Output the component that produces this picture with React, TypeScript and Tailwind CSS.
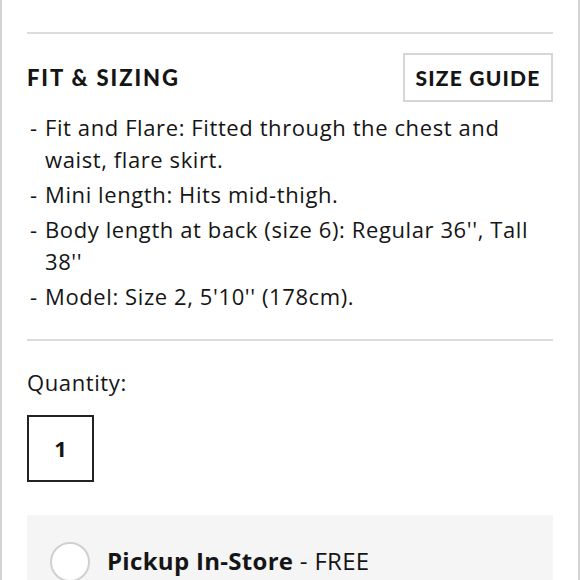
import React from "react";

const items: string[] = [
  "Fit and Flare: Fitted through the chest and waist, flare skirt.",
  "Mini length: Hits mid-thigh.",
  "Body length at back (size 6): Regular 36'', Tall 38''",
  "Model: Size 2, 5'10'' (178cm).",
];

export default function App() {
  return (
    <div className="w-[580px] h-[580px] overflow-hidden bg-white border-x-2 border-[#d4d4d4] text-[#151515]">
      <div className="px-[25px] pt-[32px]">
        <div className="h-[2px] bg-[#dcdcdc]" />
        <div className="mt-[19px] flex items-center justify-between" style={{ fontFamily: "Lato, sans-serif" }}>
          <h2 className="text-[22px] font-black tracking-[1.9px] leading-none">FIT &amp; SIZING</h2>
          <button className="w-[150px] h-[49px] border-2 border-[#d6d6d6] bg-white text-[21px] font-black tracking-[1.2px] leading-none text-[#151515]">
            SIZE GUIDE
          </button>
        </div>
        <div style={{ fontFamily: "'Open Sans', sans-serif" }}>
          <ul className="mt-[9px] pr-[20px] flex flex-col gap-[3px] text-[22px] leading-[32px] tracking-[0.6px]">
            {items.map((t) => (
              <li key={t} className="flex">
                <span className="w-[18px] shrink-0 pl-[3px]">-</span>
                <span>{t}</span>
              </li>
            ))}
          </ul>
          <div className="mt-[27px] h-[2px] bg-[#dcdcdc]" />
          <div className="mt-[25px] text-[22px] leading-[32px] tracking-[0.6px]">Quantity:</div>
          <div className="mt-[17px] w-[67px] h-[67px] border-2 border-[#222] flex items-center justify-center text-[22px] font-bold">
            1
          </div>
          <div className="mt-[33px] bg-[#f5f5f5] pl-[23px] pt-[27px] h-[120px] flex items-start gap-[17px]">
            <div className="w-[40px] h-[40px] rounded-full border-2 border-[#d0d0d0] bg-white shrink-0" />
            <div className="text-[24px] leading-[38px] tracking-[0.3px]">
              <span className="font-bold">Pickup In-Store</span>
              <span> - FREE</span>
            </div>
          </div>
        </div>
      </div>
    </div>
  );
}
